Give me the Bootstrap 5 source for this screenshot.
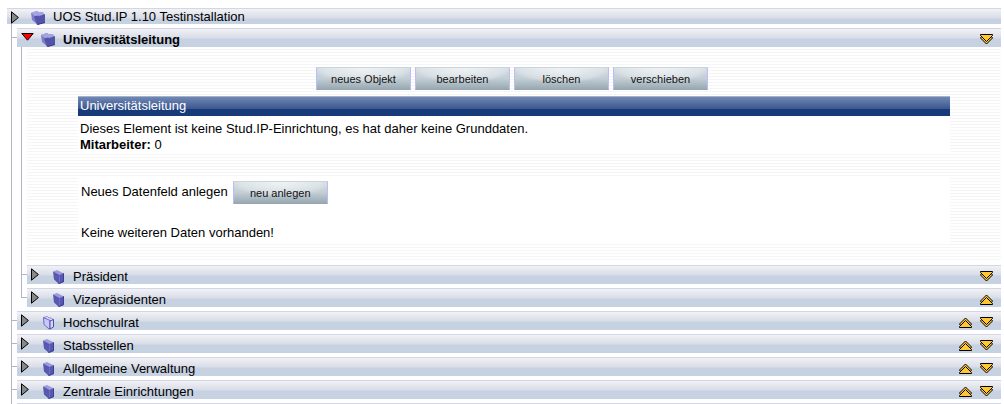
<!DOCTYPE html>
<html lang="de">
<head>
<meta charset="utf-8">
<meta name="viewport" content="width=device-width, initial-scale=1">
<title>Stud.IP – Einrichtungshierarchie</title>
<link href="https://cdn.jsdelivr.net/npm/bootstrap@5.3.0/dist/css/bootstrap.min.css" rel="stylesheet">
<style>
  body { font-family: "Liberation Sans", Arial, sans-serif; font-size: 13px; line-height: 16px; color: #000; background: #fff; }
  a { color: inherit; text-decoration: none; }
  .tree { padding: 8px 3px 0 7px; }
  /* gutter that carries the connecting lines */
  .rail { width: 10px; flex: none; background: linear-gradient(#b2b2ca, #b2b2ca) 4px 0 / 1px 100% no-repeat, linear-gradient(#b2b2ca, #b2b2ca) 4px 9px / 6px 1px no-repeat; }
  .rail-straight { background: linear-gradient(#b2b2ca, #b2b2ca) 4px 0 / 1px 100% no-repeat; }
  .rail-end { background-size: 1px 9px, 6px 1px; }
  .head { height: 19px; padding: 2px 8px 0 4px; background: linear-gradient(#f1f2f4, #d9dce8 9px, #c6d1e2 10px); border-top: 1px solid #d2d5eb; }
  .head-root { height: 16px; padding-top: 0; }
  .branch { padding-bottom: 4px; }
  .toggle { width: 20px; flex: none; line-height: 0; }
  .toggle-root { padding-top: 2px; }
  .toggle-open { padding-top: 2px; }
  .folder { width: 22px; flex: none; line-height: 0; padding-top: 1px; }
  .label { padding-top: 1px; }
  .head svg { display: block; }
  .sort { gap: 8px; line-height: 0; padding-top: 3px; }
  .next-row { height: 1px; background: #d2d5eb; }
  .panel { padding: 20px 51px 17px; margin-bottom: 4px; background: repeating-linear-gradient(#fff 0 2px, #f5f5f5 2px 3px); }
  .tools { gap: 4px; padding-right: 4px; margin-bottom: 6px; }
  .push { width: 95px; height: 23px; padding: 0; font-size: 11px; line-height: 20px; color: #111; border: 1px solid #bcbcf8; border-top-color: #c9d5da; border-bottom-color: #97a6b0; border-radius: 0;
    background: radial-gradient(ellipse 50px 14px at 50% 1px, rgba(255,255,255,.65), rgba(255,255,255,.3) 80%, rgba(255,255,255,0)), linear-gradient(#d0dbe1, #c3ced5 50%, #98a9b2); }
  .title-bar { height: 20px; padding: 2px 2px 0; font-size: 13px; line-height: 16px; color: #fff; background: linear-gradient(#a6b2cb 1px, #7088b3 1px, #3b5690 13px, #173a79 13px); }
  .facts { padding: 5px 2px 1px; margin-bottom: 23px; }
  .fields { padding: 4px 3px 3px; }
  .fields-row { gap: 5px; margin-bottom: 21px; }
</style>
</head>
<body>
<svg class="d-none" aria-hidden="true">
  <symbol id="closed-arrow" viewBox="0 0 8 13"><path d="M.5.8v11.4L7.4 6.5z" fill="#888" stroke="#000"/></symbol>
  <symbol id="open-arrow" viewBox="0 0 13 8"><path d="M.8.5h11.4L6.5 7.2z" fill="#f00" stroke="#000"/></symbol>
  <symbol id="folder-wide" viewBox="0 0 15 15">
    <path d="M0 3l6-2 2 1.500 4-.5 1 3-7 9-5-4z" fill="#7d7dcb"/>
    <path d="M0 3l6-2 2 1.500 4-.5.5 2.500-8 2z" fill="#a4a4e0"/>
    <path d="M3 6.500l4-1 1 1 6-2.500v8.500L6 15z" fill="#5353aa"/>
    <path d="M6.500 14.500l7.500-2" fill="none" stroke="#3a3a8e"/>
  </symbol>
  <symbol id="folder-full" viewBox="0 0 15 15">
    <path d="M2 2.500l4-1.500 6 3v2l-5 2z" fill="#9c9cdc"/>
    <path d="M2 2.500L8.500 6l4.500-2v9l-5 2-5-4.500z" fill="#5858b0"/>
    <path d="M8.500 6.500v7.500" stroke="#7070c0"/>
    <path d="M12.500 4.500v8l-5 2" fill="none" stroke="#3e3e94"/>
  </symbol>
  <symbol id="folder-open" viewBox="0 0 15 15">
    <path d="M2.500 2.500l4-1 1.500 1.500h2.500l2 2-5 2z" fill="#dcdcff" stroke="#8c8cd8"/>
    <path d="M2.500 2.500L9 5.500v8.500h-1l-5-4.500z" fill="#c8c8fa" stroke="#6c6cc0"/>
    <path d="M9 6l3.500-1.500v7.500l-3.500 2z" fill="#d4d4ff" stroke="#4c4ca4"/>
  </symbol>
  <symbol id="sort-down" viewBox="0 0 13 11">
    <path d="M1.500 2.500l-1 1.500 6 6 6-6-1-1.500z" fill="#ffc832" stroke="#000"/>
    <path d="M.5.5h12v1l-6 6-6-6z" fill="#ffc832" stroke="#000"/>
  </symbol>
  <symbol id="sort-up" viewBox="0 0 13 11">
    <path d="M1.500 8.500l-1-1.500 6-6 6 6-1 1.500z" fill="#ffc832" stroke="#000"/>
    <path d="M.5 10.500h12v-1l-6-6-6 6z" fill="#ffc832" stroke="#000"/>
  </symbol>
</svg>

<main class="tree">
  <div class="head head-root d-flex">
    <a href="#" class="toggle toggle-root" aria-label="Öffnen"><svg width="8" height="13"><use href="#closed-arrow"/></svg></a>
    <span class="folder"><svg width="15" height="15"><use href="#folder-wide"/></svg></span>
    <a href="#">UOS Stud.IP 1.10 Testinstallation</a>
  </div>
  <div class="d-flex"><div class="rail rail-straight pt-1"></div></div>

  <ul class="list-unstyled mb-0">
    <li class="d-flex">
      <div class="rail"></div>
      <div class="flex-fill">
        <div class="head d-flex">
          <a href="#" class="toggle toggle-open" aria-label="Schließen"><svg width="13" height="8"><use href="#open-arrow"/></svg></a>
          <span class="folder"><svg width="15" height="15"><use href="#folder-wide"/></svg></span>
          <a href="#" class="flex-fill label fw-bold">Universitätsleitung</a>
          <span class="sort d-flex"><a href="#" aria-label="Nach unten"><svg width="13" height="11"><use href="#sort-down"/></svg></a></span>
        </div>

        <div class="d-flex">
          <div class="rail rail-straight"></div>
          <section class="panel flex-fill">
            <div class="tools d-flex justify-content-center">
              <button type="button" class="btn push">neues Objekt</button>
              <button type="button" class="btn push">bearbeiten</button>
              <button type="button" class="btn push">löschen</button>
              <button type="button" class="btn push">verschieben</button>
            </div>
            <h1 class="title-bar mb-0 fw-normal">Universitätsleitung</h1>
            <div class="facts bg-white">
              <div>Dieses Element ist keine Stud.IP-Einrichtung, es hat daher keine Grunddaten.</div>
              <div><b>Mitarbeiter:</b> 0</div>
            </div>
            <div class="fields bg-white">
              <div class="fields-row d-flex">
                <span class="pt-1 lh-1">Neues Datenfeld anlegen</span>
                <button type="button" class="btn push">neu anlegen</button>
              </div>
              <div>Keine weiteren Daten vorhanden!</div>
            </div>
          </section>
        </div>

        <ul class="list-unstyled mb-0">
          <li class="d-flex">
            <div class="rail"></div>
            <div class="flex-fill branch"><div class="head d-flex">
              <a href="#" class="toggle" aria-label="Öffnen"><svg width="8" height="13"><use href="#closed-arrow"/></svg></a>
              <span class="folder"><svg width="15" height="15"><use href="#folder-full"/></svg></span>
              <a href="#" class="flex-fill label">Präsident</a>
              <span class="sort d-flex"><a href="#" aria-label="Nach unten"><svg width="13" height="11"><use href="#sort-down"/></svg></a></span>
            </div></div>
          </li>
          <li class="d-flex">
            <div class="rail rail-end"></div>
            <div class="flex-fill branch"><div class="head d-flex">
              <a href="#" class="toggle" aria-label="Öffnen"><svg width="8" height="13"><use href="#closed-arrow"/></svg></a>
              <span class="folder"><svg width="15" height="15"><use href="#folder-full"/></svg></span>
              <a href="#" class="flex-fill label">Vizepräsidenten</a>
              <span class="sort d-flex"><a href="#" aria-label="Nach oben"><svg width="13" height="11"><use href="#sort-up"/></svg></a></span>
            </div></div>
          </li>
        </ul>
      </div>
    </li>
    <li class="d-flex">
      <div class="rail"></div>
      <div class="flex-fill branch"><div class="head d-flex">
        <a href="#" class="toggle" aria-label="Öffnen"><svg width="8" height="13"><use href="#closed-arrow"/></svg></a>
        <span class="folder"><svg width="15" height="15"><use href="#folder-open"/></svg></span>
        <a href="#" class="flex-fill label">Hochschulrat</a>
        <span class="sort d-flex"><a href="#" aria-label="Nach oben"><svg width="13" height="11"><use href="#sort-up"/></svg></a><a href="#" aria-label="Nach unten"><svg width="13" height="11"><use href="#sort-down"/></svg></a></span>
      </div></div>
    </li>
    <li class="d-flex">
      <div class="rail"></div>
      <div class="flex-fill branch"><div class="head d-flex">
        <a href="#" class="toggle" aria-label="Öffnen"><svg width="8" height="13"><use href="#closed-arrow"/></svg></a>
        <span class="folder"><svg width="15" height="15"><use href="#folder-full"/></svg></span>
        <a href="#" class="flex-fill label">Stabsstellen</a>
        <span class="sort d-flex"><a href="#" aria-label="Nach oben"><svg width="13" height="11"><use href="#sort-up"/></svg></a><a href="#" aria-label="Nach unten"><svg width="13" height="11"><use href="#sort-down"/></svg></a></span>
      </div></div>
    </li>
    <li class="d-flex">
      <div class="rail"></div>
      <div class="flex-fill branch"><div class="head d-flex">
        <a href="#" class="toggle" aria-label="Öffnen"><svg width="8" height="13"><use href="#closed-arrow"/></svg></a>
        <span class="folder"><svg width="15" height="15"><use href="#folder-full"/></svg></span>
        <a href="#" class="flex-fill label">Allgemeine Verwaltung</a>
        <span class="sort d-flex"><a href="#" aria-label="Nach oben"><svg width="13" height="11"><use href="#sort-up"/></svg></a><a href="#" aria-label="Nach unten"><svg width="13" height="11"><use href="#sort-down"/></svg></a></span>
      </div></div>
    </li>
    <li class="d-flex">
      <div class="rail"></div>
      <div class="flex-fill branch"><div class="head d-flex">
        <a href="#" class="toggle" aria-label="Öffnen"><svg width="8" height="13"><use href="#closed-arrow"/></svg></a>
        <span class="folder"><svg width="15" height="15"><use href="#folder-full"/></svg></span>
        <a href="#" class="flex-fill label">Zentrale Einrichtungen</a>
        <span class="sort d-flex"><a href="#" aria-label="Nach oben"><svg width="13" height="11"><use href="#sort-up"/></svg></a><a href="#" aria-label="Nach unten"><svg width="13" height="11"><use href="#sort-down"/></svg></a></span>
      </div></div>
    </li>
    <li class="d-flex"><div class="rail"></div><div class="next-row flex-fill"></div></li>
  </ul>
</main>
</body>
</html>
